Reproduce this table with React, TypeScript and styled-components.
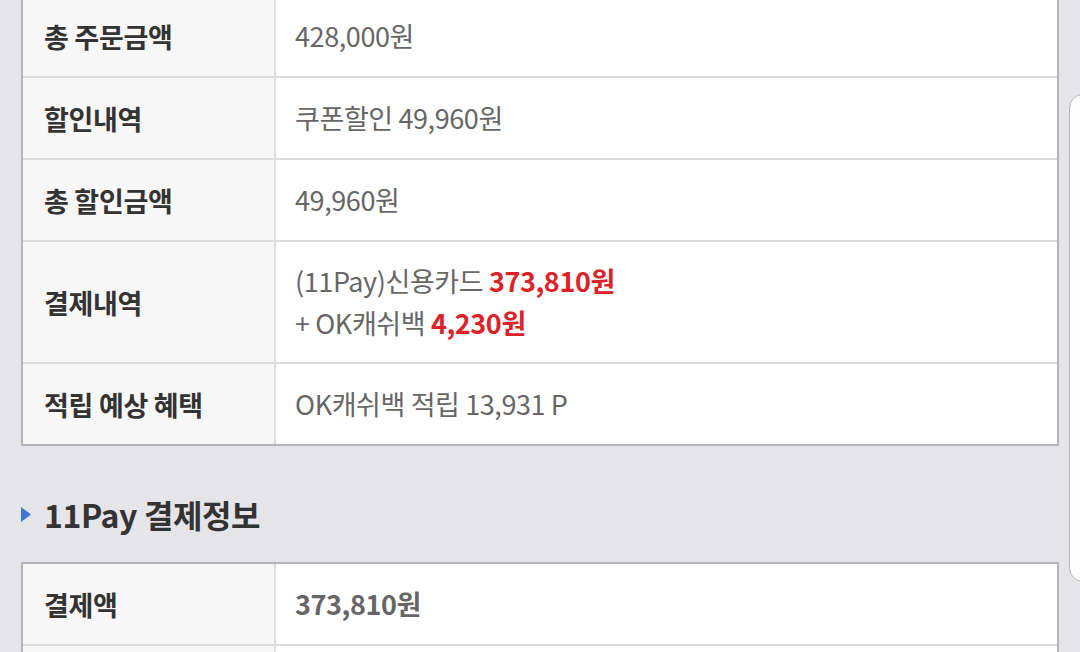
import React from "react";
import styled, { createGlobalStyle } from "styled-components";

const GlobalStyle = createGlobalStyle`
  html, body {
    margin: 0;
    padding: 0;
    background: #e4e4e9;
    overflow: hidden;
  }
  body {
    font-family: "Noto Sans CJK KR", "Noto Sans", Roboto, sans-serif;
    -webkit-font-smoothing: antialiased;
  }
`;

const Page = styled.div`
  position: relative;
  width: 1080px;
  height: 652px;
  overflow: hidden;
  background: #e4e4e9;
`;

const Content = styled.div`
  margin-top: -6px;
  padding: 0 21px;
`;

const Table = styled.div`
  width: 1038px;
  box-sizing: border-box;
  border: 2px solid #b4b4b8;
  background: #fff;
`;

const Row = styled.div<{ $tall?: boolean }>`
  display: grid;
  grid-template-columns: 253px 1fr;
  min-height: ${(p) => (p.$tall ? 120 : 80)}px;
  border-bottom: 2px solid #dcdcdc;
  &:last-child {
    border-bottom: none;
  }
`;

const Label = styled.div`
  display: flex;
  align-items: center;
  padding-left: 21px;
  background: #f7f7f7;
  border-right: 2px solid #dcdcdc;
  font-size: 27px;
  font-weight: 700;
  color: #333;
  letter-spacing: -0.3px;
`;

const Value = styled.div<{ $bold?: boolean }>`
  display: flex;
  flex-direction: column;
  justify-content: center;
  padding-left: 19px;
  font-size: 27px;
  font-weight: ${(p) => (p.$bold ? 700 : 400)};
  color: #666;
  letter-spacing: -0.4px;
  line-height: 42px;
`;

const Red = styled.span`
  color: #dc2127;
  font-weight: 700;
`;

const SectionTitle = styled.h2`
  display: flex;
  align-items: center;
  gap: 13px;
  margin: 46px 0 0;
  height: 44px;
  font-size: 32px;
  font-weight: 700;
  color: #333;
  letter-spacing: -0.4px;
`;

const Spacer = styled.div`
  height: 26px;
`;

const EdgeCard = styled.div`
  position: absolute;
  left: 1069px;
  top: 94px;
  width: 40px;
  height: 488px;
  box-sizing: border-box;
  border: 1px solid #b8b8bc;
  border-radius: 14px;
  background: #fdfdfd;
`;

const rows = [
  { label: "총 주문금액", value: "428,000원" },
  { label: "할인내역", value: "쿠폰할인 49,960원" },
  { label: "총 할인금액", value: "49,960원" },
];

export default function App() {
  return (
    <Page>
      <GlobalStyle />
      <Content>
        <Table>
          {rows.map((r) => (
            <Row key={r.label}>
              <Label>{r.label}</Label>
              <Value>{r.value}</Value>
            </Row>
          ))}
          <Row $tall>
            <Label>결제내역</Label>
            <Value>
              <div>
                (11Pay)신용카드 <Red>373,810원</Red>
              </div>
              <div>
                + OK캐쉬백 <Red>4,230원</Red>
              </div>
            </Value>
          </Row>
          <Row>
            <Label>적립 예상 혜택</Label>
            <Value>OK캐쉬백 적립 13,931 P</Value>
          </Row>
        </Table>

        <SectionTitle>
          <svg width="10" height="15" viewBox="0 0 10 15">
            <path d="M0 0 L10 7.5 L0 15 Z" fill="#3d74d6" />
          </svg>
          11Pay 결제정보
        </SectionTitle>
        <Spacer />

        <Table>
          <Row>
            <Label>결제액</Label>
            <Value $bold>373,810원</Value>
          </Row>
          <Row>
            <Label />
            <Value />
          </Row>
        </Table>
      </Content>
      <EdgeCard />
    </Page>
  );
}
